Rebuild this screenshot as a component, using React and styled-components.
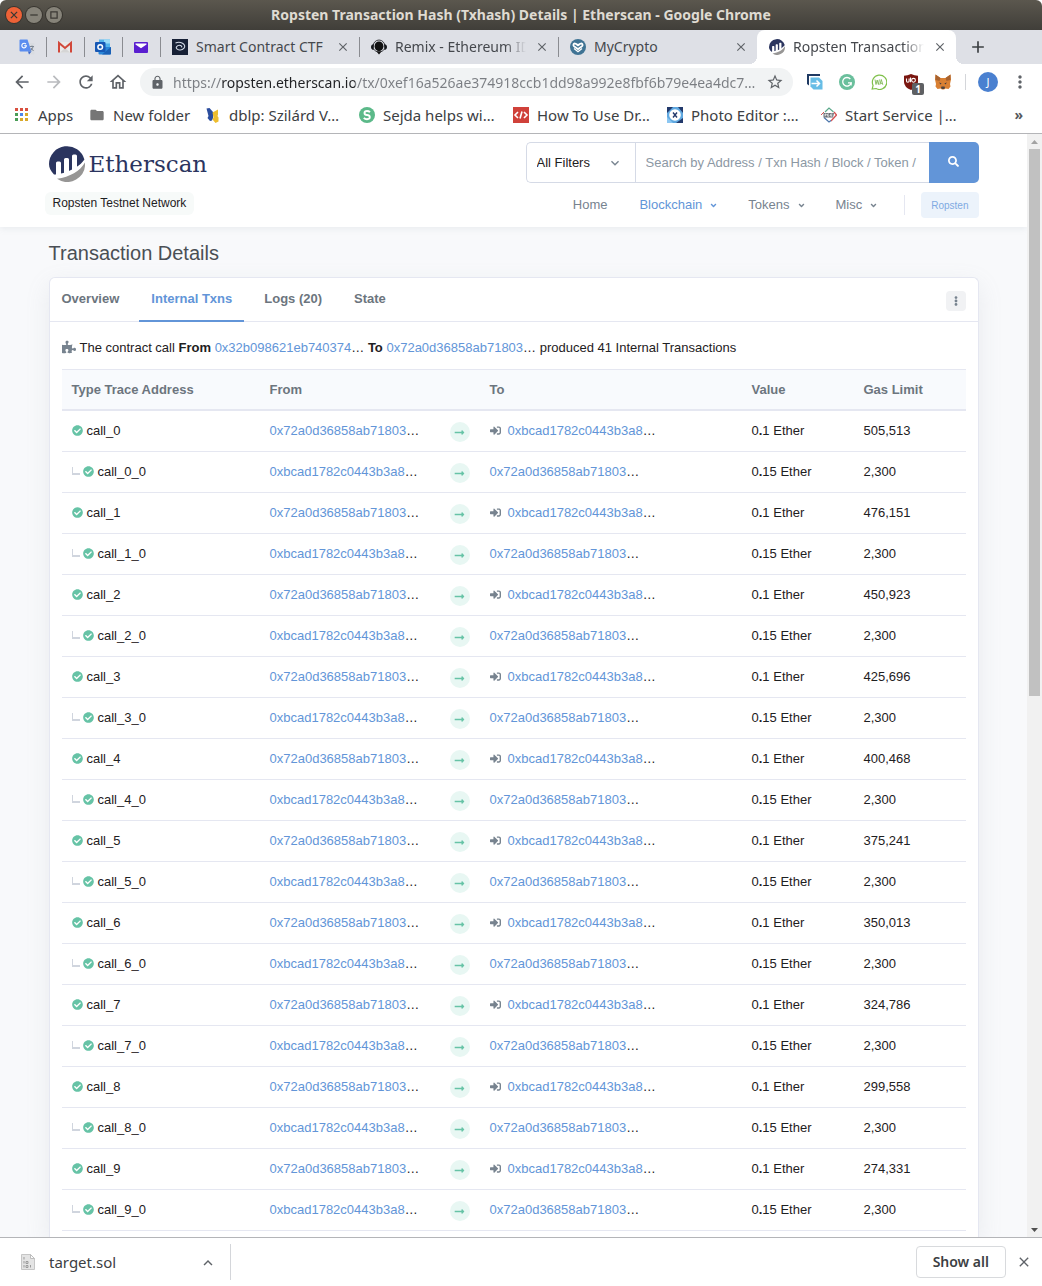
import React from "react";
import styled, { createGlobalStyle, css } from "styled-components";
import {
  FaCheckCircle,
  FaSignInAlt,
  FaSearch,
  FaEllipsisV,
  FaLongArrowAltRight,
  FaAngleDown,
  FaPuzzlePiece,
} from "react-icons/fa";
import {
  MdArrowBack,
  MdArrowForward,
  MdRefresh,
  MdLock,
  MdStarBorder,
  MdMoreVert,
  MdClose,
  MdAdd,
  MdKeyboardArrowUp,
  MdKeyboardArrowDown,
  MdFolder,
  MdOutlineHome,
} from "react-icons/md";

const ui = `"Noto Sans", "Open Sans", sans-serif`;
const sans = `"Liberation Sans", Arial, sans-serif`;

const c = {
  link: "#6295d8",
  text: "#1e2022",
  muted: "#77838f",
  head: "#6c757e",
  line: "#e5e7f1",
  green: "#66c3a6",
  navy: "#2b355f",
  chrome: "#5f6368",
};

const GlobalStyle = createGlobalStyle`
  *, *::before, *::after { box-sizing: border-box; }
  body { margin: 0; background: #fff; font-family: ${sans}; }
  button, input, select { font-family: inherit; margin: 0; }
  button { border: 0; padding: 0; background: none; cursor: pointer; }
  a { color: ${c.link}; text-decoration: none; }
  svg { display: block; flex: none; }
`;

/* ---------- window chrome ---------- */

const Window = styled.div`
  display: flex;
  flex-direction: column;
  height: 100vh;
  overflow: hidden;
`;

const TitleBar = styled.header`
  display: grid;
  grid-template-columns: 1fr auto 1fr;
  align-items: center;
  flex: none;
  height: 30px;
  padding: 0 6px;
  border-radius: 6px 6px 0 0;
  background: linear-gradient(#5b574e, #403e39);
`;

const WindowButtons = styled.div`
  display: flex;
  gap: 4px;
`;

const WindowButton = styled.button`
  display: grid;
  place-items: center;
  width: 16px;
  height: 16px;
  border-radius: 50%;
  color: #3b3934;
  background: ${(p) => (p.$close ? "#ee6237" : "#868379")};
  box-shadow: 0 0 0 1px #37352f;
`;

const WindowTitle = styled.div`
  color: #dfdbd2;
  font: 700 14px/20px ${ui};
  white-space: nowrap;
`;

const TabStrip = styled.nav`
  display: flex;
  flex: none;
  height: 34px;
  padding-left: 8px;
  background: #dee0e6;
`;

const tabBase = css`
  display: flex;
  align-items: center;
  position: relative;
  height: 34px;
`;

const tabDivider = css`
  content: "";
  width: 1px;
  height: 20px;
  background: #8a8c91;
  position: absolute;
  right: -1px;
`;

const PinnedTab = styled.button`
  ${tabBase}
  justify-content: center;
  flex: none;
  width: 38px;
  &::after {
    ${tabDivider}
  }
`;

const Tab = styled.div`
  ${tabBase}
  flex: 0 1 199px;
  min-width: 0;
  gap: 8px;
  padding: 0 8px 0 12px;
  color: #45484d;
  border-radius: 8px 8px 0 0;
  ${(p) =>
    p.$divider &&
    css`
      &::after {
        ${tabDivider}
      }
    `}
  ${(p) =>
    p.$active &&
    css`
      background: #fff;
      &::before {
        content: "";
        position: absolute;
        bottom: 0;
        left: -8px;
        right: -8px;
        height: 8px;
        background:
          radial-gradient(circle at 0 0, transparent 8px, #fff 8px) left / 8px 8px no-repeat,
          radial-gradient(circle at 100% 0, transparent 8px, #fff 8px) right / 8px 8px no-repeat;
      }
    `}
`;

const TabTitle = styled.span`
  flex: 1;
  min-width: 0;
  overflow: hidden;
  white-space: nowrap;
  font: 14px/20px ${ui};
  mask-image: ${(p) => (p.$fade ? "linear-gradient(90deg, #000 84%, transparent)" : "none")};
`;

const IconButton = styled.button`
  display: grid;
  place-items: center;
  flex: none;
  width: ${(p) => p.$w || 16}px;
  height: ${(p) => p.$w || 16}px;
  color: ${(p) => p.$color || c.chrome};
`;

const NewTab = styled(IconButton)`
  align-self: center;
  margin-left: 12px;
`;

const Toolbar = styled.div`
  display: flex;
  align-items: center;
  flex: none;
  height: 36px;
  padding: 0 12px;
  background: #fff;
`;

const NavButtons = styled.div`
  display: flex;
  gap: 12px;
  margin-right: 12px;
`;

const AddressBar = styled.label`
  display: flex;
  align-items: center;
  flex: 1;
  min-width: 0;
  height: 28px;
  padding: 0 8px 0 10px;
  gap: 8px;
  border-radius: 14px;
  background: #f1f3f4;
  color: ${c.chrome};
`;

const AddressInput = styled.input`
  flex: 1;
  min-width: 0;
  height: 28px;
  padding: 0;
  border: 0;
  outline: 0;
  font: 14px/20px ${ui};
  color: transparent;
  background: linear-gradient(90deg, #7b7e83 48px, #202124 48px, #202124 182px, #7b7e83 182px);
  background-clip: text;
  -webkit-background-clip: text;
`;

const Extensions = styled.div`
  display: flex;
  align-items: center;
  gap: 16px;
  margin-left: 14px;
`;

const ExtensionButton = styled(IconButton)`
  position: relative;
`;

const CountBadge = styled.span`
  position: absolute;
  left: 9px;
  top: 9px;
  width: 12px;
  height: 12px;
  border-radius: 2px;
  background: #5e6063;
  color: #fff;
  font: 700 10px/12px ${ui};
  text-align: center;
`;

const Divider = styled.span`
  width: 1px;
  height: ${(p) => p.$h}px;
  background: ${(p) => p.$color || "#d4d6da"};
`;

const Avatar = styled.button`
  width: 20px;
  height: 20px;
  border-radius: 50%;
  background: #4a80d0;
  color: #fff;
  font: 11px/20px ${ui};
`;

const Profile = styled.div`
  display: flex;
  align-items: center;
  gap: 12px;
  margin-left: 14px;
`;

const Bookmarks = styled.nav`
  display: flex;
  align-items: center;
  flex: none;
  height: 34px;
  padding: 0 19px 4px 14px;
  border-bottom: 1px solid #b4b5b8;
  background: #fff;
`;

const Bookmark = styled.a`
  display: flex;
  align-items: center;
  flex: none;
  gap: 8px;
  width: ${(p) => p.$w}px;
  color: #3c4043;
  font: 15px/20px ${ui};
  white-space: nowrap;
`;

const MoreBookmarks = styled.button`
  margin-left: auto;
  color: #55585c;
  font: 700 14px/20px ${ui};
`;

/* ---------- page ---------- */

const Viewport = styled.div`
  display: flex;
  flex: 1;
  min-height: 0;
`;

const Page = styled.div`
  display: flex;
  flex-direction: column;
  flex: 1;
  min-width: 0;
  overflow: hidden;
  background: #f8f9fb;
  color: ${c.text};
  font-size: 13px;
  line-height: 20px;
`;

const Container = styled.div`
  width: 100%;
  max-width: 960px;
  margin: 0 auto;
  padding: 0 15px;
`;

const SiteHeader = styled.header`
  flex: none;
  background: #fff;
  box-shadow: 0 2px 6px rgba(140, 152, 164, 0.13);
`;

const HeaderInner = styled(Container)`
  display: flex;
  justify-content: space-between;
  height: 93px;
  padding-top: 8px;
`;

const Brand = styled.div`
  display: flex;
  flex-direction: column;
  align-items: flex-start;
  gap: 10px;
  padding-top: 4px;
`;

const Logo = styled.a`
  display: flex;
  align-items: center;
  gap: 4px;
  height: 36px;
  color: ${c.navy};
  font: 23px/36px "DejaVu Serif", serif;
`;

const NetworkBadge = styled.span`
  margin-left: -4px;
  padding: 0 8px;
  border-radius: 6px;
  background: #f7faf9;
  font-size: 12px;
  line-height: 23px;
`;

const HeaderRight = styled.div`
  display: flex;
  flex-direction: column;
  align-items: flex-end;
  gap: 9px;
`;

const SearchForm = styled.form`
  display: flex;
  width: 453px;
  height: 41px;
`;

const FilterWrap = styled.div`
  display: grid;
  align-items: center;
  flex: none;
  width: 109px;
  border: 1px solid #d5dae6;
  border-right: 0;
  border-radius: 5px 0 0 5px;
  background: #fff;
  & > * {
    grid-area: 1 / 1;
  }
  & > svg {
    justify-self: end;
    margin-right: 12px;
    color: ${c.muted};
    pointer-events: none;
  }
`;

const FilterSelect = styled.select`
  appearance: none;
  width: 100%;
  height: 39px;
  padding: 0 10px;
  border: 0;
  background: transparent;
  color: ${c.text};
  font-size: 13px;
`;

const SearchInput = styled.input`
  flex: 1;
  min-width: 0;
  padding: 0 10px;
  border: 1px solid #d5dae6;
  border-right: 0;
  border-radius: 0;
  background: #fff;
  font-size: 13px;
  &::placeholder {
    color: #8c98a4;
    opacity: 1;
  }
`;

const SearchButton = styled.button`
  display: grid;
  place-items: center;
  flex: none;
  width: 50px;
  padding-bottom: 3px;
  border-radius: 0 5px 5px 0;
  background: ${c.link};
  color: #fff;
`;

const SiteNav = styled.nav`
  display: flex;
  align-items: center;
  height: 26px;
`;

const NavLink = styled.a`
  display: flex;
  align-items: center;
  gap: 7px;
  margin-right: ${(p) => p.$gap || 30}px;
  color: ${(p) => (p.$active ? c.link : c.muted)};
`;

const NetworkButton = styled.button`
  height: 26px;
  margin-left: 16px;
  padding: 0 10px;
  border-radius: 4px;
  background: #ecf3fb;
  color: #7faae2;
  font-size: 10px;
`;

const Main = styled(Container).attrs({ as: "main" })`
  display: flex;
  flex-direction: column;
  flex: 1;
  min-height: 0;
`;

const PageTitle = styled.h1`
  margin: 0;
  padding: 13px 0 11px;
  color: #4a4f55;
  font-size: 20px;
  font-weight: 400;
  line-height: 26px;
`;

const Card = styled.section`
  flex: 1;
  border: 1px solid ${c.line};
  border-bottom: 0;
  border-radius: 6px 6px 0 0;
  background: #fff;
  box-shadow: 0 8px 24px rgba(140, 152, 164, 0.14);
`;

const CardTabs = styled.nav`
  display: flex;
  align-items: center;
  height: 44px;
  gap: 8px;
  padding-right: 12px;
  border-bottom: 1px solid ${c.line};
`;

const CardTab = styled.a`
  align-self: stretch;
  padding: 11px 12px 0;
  margin-bottom: -1px;
  border-bottom: ${(p) => (p.$active ? `2px solid ${c.link}` : "0")};
  color: ${(p) => (p.$active ? c.link : c.head)};
  font-weight: 700;
`;

const CardMenu = styled.button`
  display: grid;
  place-items: center;
  width: 20px;
  height: 20px;
  margin-left: auto;
  margin-top: 3px;
  border-radius: 4px;
  background: #f1f2f4;
  color: ${c.muted};
`;

const CardBody = styled.div`
  padding: 16px 12px 0;
`;

const Summary = styled.p`
  display: flex;
  align-items: center;
  gap: 4px;
  margin: 0 0 11px;
  white-space: nowrap;
  & > svg {
    margin-bottom: 2px;
    color: ${c.muted};
  }
`;

const Table = styled.table`
  width: 100%;
  table-layout: fixed;
  border-collapse: separate;
  border-spacing: 0;
`;

const Th = styled.th`
  height: 42px;
  padding: 0 10px;
  border-top: 1px solid ${c.line};
  border-bottom: 2px solid ${c.line};
  background: #f8fafd;
  color: ${c.head};
  font-weight: 700;
  text-align: left;
`;

const Td = styled.td`
  height: 41px;
  padding: 0 10px;
  border-bottom: 1px solid ${c.line};
  white-space: nowrap;
`;

const Cell = styled.div`
  display: flex;
  align-items: center;
  gap: ${(p) => p.$gap}px;
  & > svg {
    margin-bottom: 1px;
  }
`;

const Branch = styled.span`
  width: 8px;
  height: 8px;
  margin-right: -1px;
  margin-bottom: 2px;
  border-left: 1px solid #d0d5de;
  border-bottom: 2px solid #d0d5de;
`;

const CheckIcon = styled(FaCheckCircle)`
  color: ${c.green};
`;

const EnterIcon = styled(FaSignInAlt)`
  color: ${c.muted};
`;

const ArrowBadge = styled.span`
  display: grid;
  place-items: center;
  width: 20px;
  height: 20px;
  margin-top: 2px;
  border-radius: 50%;
  background: #e8f7f3;
  color: ${c.green};
`;

const ScrollTrack = styled.div`
  display: flex;
  flex-direction: column;
  flex: none;
  width: 15px;
  background: #f1f1f1;
`;

const ScrollArrow = styled.span`
  display: grid;
  place-items: center;
  height: 15px;
`;

const ScrollLane = styled.div`
  flex: 1;
  padding: 0 2px;
`;

const ScrollThumb = styled.div`
  height: 51%;
  background: #c1c1c1;
`;

/* ---------- downloads ---------- */

const DownloadBar = styled.footer`
  display: flex;
  align-items: center;
  flex: none;
  height: 49px;
  padding: 0 10px 0 20px;
  border-top: 1px solid #b4b5b8;
  background: #fff;
`;

const DownloadItem = styled.button`
  display: flex;
  align-items: center;
  gap: 13px;
  color: #3c4043;
  font: 15px/22px ${ui};
`;

const DownloadMenu = styled(IconButton)`
  margin: 0 15px 0 83px;
`;

const ShowAll = styled.button`
  height: 32px;
  margin-left: auto;
  margin-right: 10px;
  padding: 0 16px;
  border: 1px solid #d8dadd;
  border-radius: 4px;
  color: #3c4043;
  font: 600 14px/20px ${ui};
`;

/* ---------- drawings ---------- */

const Icon16 = ({ size = 16, children }) => (
  <svg width={size} height={size} viewBox="0 0 16 16" aria-hidden="true">
    {children}
  </svg>
);

const EtherscanMark = ({ size = 36 }) => (
  <svg width={size} height={size} viewBox="0 0 36 36" aria-hidden="true">
    <path d="M5 28.4C1.6 25 0 21.600 0 18A18 18 0 0 1 35.400 13.600C32 19 23 25.500 11 27.800Q6.500 29 5 28.400Z" fill={c.navy} />
    <path d="M7 30V17a1.500 1.500 0 0 1 1.500-1.500h2A1.500 1.500 0 0 1 12 17v12zM15 28V13.500a1.500 1.500 0 0 1 1.500-1.500h2a1.500 1.500 0 0 1 1.500 1.500V27zM23 25V10a1.500 1.500 0 0 1 1.500-1.500h2A1.500 1.500 0 0 1 28 10v12z" fill="#fff" />
    <path d="M8 32.800C21 31 31 25 36 16.500A18 18 0 0 1 8 32.800Z" fill="#979695" />
  </svg>
);

const TranslateIcon = () => (
  <Icon16>
    <path d="M6 4h8.500q1 0 1 1v9.500q0 1-1 1H10z" fill="#d9dce1" />
    <path d="M1.500.5h7l4 12h-11Q.5 12.500.5 11.500v-10Q.5.500 1.500.500z" fill="#5b8def" />
    <path d="M9 12.500h3.500L10 15.500z" fill="#3a66c9" />
    <path d="M7 5.200A2.300 2.300 0 1 0 7.400 6.800H5.200" fill="none" stroke="#fff" strokeWidth="1.100" />
    <path d="M11 7.500h4M13 6.500v1M14.200 7.500q-.7 2.500-2.500 4M12 9l2.500 3" fill="none" stroke="#7d8794" />
  </Icon16>
);

const GmailIcon = () => (
  <Icon16>
    <path d="M1 3h14v10.500H1z" fill="#e9e9e9" />
    <path d="M3 13.500L8 9l5 4.500z" fill="#d5d5d5" />
    <path d="M2 13.500V4L8 9l6-5v9.500" fill="none" stroke="#d1483a" strokeWidth="2" />
  </Icon16>
);

const OutlookIcon = () => (
  <Icon16>
    <path d="M4 .5h11v8H4z" fill="#53b4ec" />
    <path d="M9 .5h6v4H9z" fill="#9bdcf8" />
    <path d="M3.500 8L16 8v6.500q0 1-1 1H4.500q-1 0-1-1z" fill="#2a86d8" />
    <path d="M16 8l-9 7.500h8q1 0 1-1z" fill="#1a60b5" />
    <rect y="3" width="10.500" height="10" rx="1" fill="#1759b5" />
    <circle cx="5.200" cy="8" r="2.300" fill="none" stroke="#fff" strokeWidth="1.500" />
  </Icon16>
);

const MailIcon = () => (
  <Icon16>
    <rect x="1" y="3" width="14" height="11" rx="1" fill="#5a1fd0" />
    <path d="M2.500 4.500h11v1L8 9.200 2.500 5.500z" fill="#fff" />
  </Icon16>
);

const SwirlIcon = () => (
  <Icon16>
    <path d="M0 0h16v16H0z" fill="#172136" />
    <path d="M3.500 4Q7 2.500 10.500 4.200q3.500 2.300 1.500 5-2 2.500-5.500 1.600-3-1-2-3Q6 5.800 8.500 6.500q1.800.8 1 1.900" fill="none" stroke="#d3dae6" strokeWidth="1.100" />
  </Icon16>
);

const RemixIcon = () => (
  <Icon16>
    <path d="M2 7.500a6 6.500 0 0 1 12 0" fill="none" stroke="#16181c" strokeWidth=".8" />
    <ellipse cx="8" cy="7.300" rx="4.400" ry="4.900" fill="#111" />
    <path d="M2.800 5v6Q0 10.500 0 8t2.800-3zM13.200 5v6Q16 10.500 16 8t-2.800-3z" fill="#16181c" />
    <path d="M3 10.500q1.500 2.500 5 2.500t5-2.500" fill="none" stroke="#16181c" strokeWidth=".8" />
    <path d="M5.500 12.500h5L8 15.500z" fill="#111" />
  </Icon16>
);

const MyCryptoIcon = () => (
  <Icon16>
    <circle cx="8" cy="8" r="8" fill="#3f7394" />
    <path d="M4.200 3.500q2 0 3.800 1.500 1.800-1.500 3.800-1.500Q13.500 4 13.500 6q0 1.200-1 2L8 11.300 3.500 8q-1-.8-1-2 0-2 1.700-2.500z" fill="#fff" />
    <path d="M4.500 5.800l3.500 2.500 3.500-2.500" fill="none" stroke="#3f7394" strokeWidth="1.300" />
    <path d="M4 9.500l4 3.200 4-3.200" fill="none" stroke="#fff" strokeWidth="1.300" />
  </Icon16>
);

const AppsIcon = () => (
  <svg width="16" height="16" viewBox="0 0 16 16" aria-hidden="true">
    {["#d9503f", "#d9503f", "#d9503f", "#4a9d57", "#4c86ec", "#d9a92a", "#4a9d57", "#d9a92a", "#d9a92a"].map((f, i) => (
      <rect key={i} x={1 + (i % 3) * 5} y={1 + Math.floor(i / 3) * 5} width="3" height="3" fill={f} />
    ))}
  </svg>
);

const DblpIcon = () => (
  <Icon16>
    <path d="M1.500 1.500l3-.5L8 5v6l-1 2.500-2 .5-2.500-3 1-2z" fill="#2b4d9e" />
    <path d="M7.500 5.500L13 2.500v5l-.5 1.500 1 1.500v4l-3 1.500L7.500 12.500l1-2z" fill="#eebd2e" />
  </Icon16>
);

const SejdaIcon = () => (
  <Icon16>
    <circle cx="8" cy="8" r="8" fill="#5bb989" />
    <path d="M11 5.200Q9.800 4 8 4 5.500 4 5.500 6T8 8t2.800 2T8 12.200q-2 0-3.200-1.400" fill="none" stroke="#fff" strokeWidth="1.900" />
  </Icon16>
);

const CodeIcon = () => (
  <Icon16>
    <path d="M0 0h16v16H0z" fill="#d0413a" />
    <path d="M5 5L2 8l3 3M11 5l3 3-3 3M9 4.500l-2 7" fill="none" stroke="#fff" strokeWidth="1.600" />
  </Icon16>
);

const PhotoIcon = () => (
  <Icon16>
    <path d="M0 0h16v16H0z" fill="#5fa8e0" />
    <path d="M0 0h6L0 6zM11 0h5v6zM16 11v5H9z" fill="#22396b" />
    <path d="M0 10v6h6z" fill="#8cc7f2" />
    <circle cx="8" cy="8" r="5.800" fill="#fff" />
    <path d="M6 5.500l4 5M10 5.500l-4 5" stroke="#22396b" strokeWidth="1.400" />
  </Icon16>
);

const PgeIcon = () => (
  <Icon16>
    <path d="M4 5l4-4 4.500 4" fill="none" stroke="#5aa88a" strokeWidth="1.200" />
    <path d="M13 5l2.500 3L10 14" fill="none" stroke="#d65252" strokeWidth="1.300" />
    <path d="M3 10.500L8 15l2-1.500" fill="none" stroke="#4c76ab" strokeWidth="1.200" />
    <path d="M0 8l3-3" stroke="#d65252" />
    <path d="M2.500 6h10.500l-1 4.500H2.500z" fill="#6a6e74" />
    <path d="M4 9.500V7h1.200v1.200H4M8 7H6.600v2.200H8V8.200M11.500 7h-1.800v2.200h1.800M9.700 8.200h1.500" fill="none" stroke="#fff" strokeWidth=".7" />
  </Icon16>
);

const ShareIcon = () => (
  <Icon16>
    <path d="M0 0h13v2H2v9.500L0 10z" fill="#1f3a63" />
    <path d="M3.500 3.500h8.500l3.500 3.500v8.500h-9l-3-3z" fill="#67bde6" />
    <path d="M4.500 9.500h8M9.500 6.500l3 3-3 3" fill="none" stroke="#fff" strokeWidth="1.500" />
  </Icon16>
);

const GrammarIcon = () => (
  <Icon16>
    <circle cx="8" cy="8" r="8" fill="#6abf9c" />
    <path d="M11.300 5A4.300 4.300 0 1 0 12.200 8.800H9" fill="none" stroke="#fff" strokeWidth="1.300" />
    <path d="M12.200 8.500v3" stroke="#fff" />
  </Icon16>
);

const WaIcon = () => (
  <Icon16>
    <path d="M1.200 15l.9-3.600A7.200 7.200 0 1 1 5 14.500z" fill="#fff" stroke="#7fc04a" strokeWidth="1.200" />
    <path d="M4 5.500l1 5 1.200-4.500 1.200 4.500 1-5M8.800 10.800l1.500-5.300 1.500 5.300M9.300 9.300h2" fill="none" stroke="#7fb956" strokeWidth=".9" />
  </Icon16>
);

const ShieldIcon = () => (
  <Icon16>
    <path d="M8 0q3.500 1.800 7 1.800V8q0 5-7 8-7-3-7-8V1.800Q4.500 1.800 8 0z" fill="#7a1710" />
    <path d="M3.500 4.500V7q0 1.200 1.300 1.200T6.100 7V4.500M7.500 3.500V8.200" fill="none" stroke="#fff" strokeWidth="1.100" />
    <circle cx="10.500" cy="6.300" r="1.900" fill="none" stroke="#fff" strokeWidth="1.100" />
  </Icon16>
);

const FoxIcon = () => (
  <Icon16>
    <path d="M.500.500L5.500 4h5l5-3.500.5 5-1 4.500.5 2.500-2 2.500-3-.5-1.500 1h-2L5.500 14.500l-3 .5-2-2.500L1 10 0 5.500z" fill="#d98033" />
    <path d="M.500.500L5.500 4 4.500 7 .5 6zM15.500.500l-5 3.500 1 3 4-1z" fill="#a8622f" />
    <path d="M4 8.500l2.500.8-.8 1.200zM12 8.500l-2.500.8.800 1.200z" fill="#3a3a42" />
    <path d="M6.500 12.500h3l.5 1.500-1 1H7l-1-1z" fill="#4b4342" />
  </Icon16>
);

const FileIcon = () => (
  <Icon16>
    <path d="M1.500.500h9l4 4v11h-13z" fill="#e4e4e4" stroke="#c6c6c6" />
    <path d="M10.500.500v4h4z" fill="#fafafa" stroke="#bdbdbd" />
    <path d="M4 3v2.500M4 7v2.500M6 7.500h2v2H6zM4 11v2.500M6 11.500h2v2H6zM10.500 11v2.500" fill="none" stroke="#9b9b9b" />
  </Icon16>
);

/* ---------- data ---------- */

const PARENT = "0x72a0d36858ab71803";
const CHILD = "0xbcad1782c0443b3a8";
const GAS = ["505,513", "476,151", "450,923", "425,696", "400,468", "375,241", "350,013", "324,786", "299,558", "274,331"];

const rows = GAS.flatMap((gas, i) => [
  { name: `call_${i}`, from: PARENT, to: CHILD, value: "1", gas },
  { name: `call_${i}_0`, from: CHILD, to: PARENT, value: "15", gas: "2,300", nested: true },
]);

const bookmarks = [
  { label: "Apps", icon: <AppsIcon />, w: 75 },
  { label: "New folder", icon: <MdFolder size={16} color="#757575" />, w: 116 },
  { label: "dblp: Szilárd V…", icon: <DblpIcon />, w: 154 },
  { label: "Sejda helps wi…", icon: <SejdaIcon />, w: 154 },
  { label: "How To Use Dr…", icon: <CodeIcon />, w: 154 },
  { label: "Photo Editor :…", icon: <PhotoIcon />, w: 154 },
  { label: "Start Service |…", icon: <PgeIcon />, w: 154 },
];

const pinned = [
  { label: "Translate", icon: <TranslateIcon /> },
  { label: "Gmail", icon: <GmailIcon /> },
  { label: "Outlook", icon: <OutlookIcon /> },
  { label: "Mail", icon: <MailIcon /> },
];

const tabs = [
  { label: "Smart Contract CTF", icon: <SwirlIcon />, divider: true },
  { label: "Remix - Ethereum IDE", icon: <RemixIcon />, divider: true, fade: true },
  { label: "MyCrypto", icon: <MyCryptoIcon /> },
  { label: "Ropsten Transaction", icon: <EtherscanMark size={16} />, active: true, fade: true },
];

const Hash = ({ children }) => (
  <span>
    <a href="#address">{children}</a>…
  </span>
);

const BrowserChrome = () => (
  <>
    <TitleBar>
      <WindowButtons>
        <WindowButton $close aria-label="Close window">
          <Icon16 size={10}><path d="M3 3l10 10M13 3L3 13" stroke="currentColor" strokeWidth="2" /></Icon16>
        </WindowButton>
        <WindowButton aria-label="Minimize window">
          <Icon16 size={10}><path d="M2 8h12" stroke="currentColor" strokeWidth="2" /></Icon16>
        </WindowButton>
        <WindowButton aria-label="Maximize window">
          <Icon16 size={10}><path d="M3 3h10v10H3z" fill="none" stroke="currentColor" strokeWidth="2" /></Icon16>
        </WindowButton>
      </WindowButtons>
      <WindowTitle>Ropsten Transaction Hash (Txhash) Details | Etherscan - Google Chrome</WindowTitle>
    </TitleBar>
    <TabStrip>
      {pinned.map((t) => (
        <PinnedTab key={t.label} aria-label={t.label}>{t.icon}</PinnedTab>
      ))}
      {tabs.map((t) => (
        <Tab key={t.label} $active={t.active} $divider={t.divider}>
          {t.icon}
          <TabTitle $fade={t.fade}>{t.label}</TabTitle>
          <IconButton aria-label={`Close ${t.label}`}><MdClose size={14} /></IconButton>
        </Tab>
      ))}
      <NewTab $w={20} $color="#3c4043" aria-label="New tab"><MdAdd size={20} /></NewTab>
    </TabStrip>
    <Toolbar>
      <NavButtons>
        <IconButton $w={20} aria-label="Back"><MdArrowBack size={20} /></IconButton>
        <IconButton $w={20} $color="#b9bbbe" aria-label="Forward"><MdArrowForward size={20} /></IconButton>
        <IconButton $w={20} aria-label="Reload"><MdRefresh size={20} /></IconButton>
        <IconButton $w={20} aria-label="Home"><MdOutlineHome size={20} /></IconButton>
      </NavButtons>
      <AddressBar>
        <MdLock size={15} />
        <AddressInput
          aria-label="Address"
          defaultValue="https://ropsten.etherscan.io/tx/0xef16a526ae374918ccb1dd98a992e8fbf6b79e4ea4dc7…"
        />
        <IconButton $w={20} aria-label="Bookmark this page"><MdStarBorder size={18} /></IconButton>
      </AddressBar>
      <Extensions>
        <IconButton aria-label="Share"><ShareIcon /></IconButton>
        <IconButton aria-label="Grammar"><GrammarIcon /></IconButton>
        <IconButton aria-label="Chat"><WaIcon /></IconButton>
        <ExtensionButton aria-label="Blocker">
          <ShieldIcon />
          <CountBadge>1</CountBadge>
        </ExtensionButton>
        <IconButton aria-label="Wallet"><FoxIcon /></IconButton>
      </Extensions>
      <Profile>
        <Divider $h={16} />
        <Avatar>J</Avatar>
        <IconButton $w={20} aria-label="Browser menu"><MdMoreVert size={20} /></IconButton>
      </Profile>
    </Toolbar>
    <Bookmarks>
      {bookmarks.map((b) => (
        <Bookmark key={b.label} href="#bookmark" $w={b.w}>
          {b.icon}
          {b.label}
        </Bookmark>
      ))}
      <MoreBookmarks aria-label="More bookmarks">»</MoreBookmarks>
    </Bookmarks>
  </>
);

const Header = () => (
  <SiteHeader>
    <HeaderInner>
      <Brand>
        <Logo href="#home">
          <EtherscanMark />
          Etherscan
        </Logo>
        <NetworkBadge>Ropsten Testnet Network</NetworkBadge>
      </Brand>
      <HeaderRight>
        <SearchForm onSubmit={(e) => e.preventDefault()}>
          <FilterWrap>
            <FilterSelect aria-label="Filter">
              <option>All Filters</option>
            </FilterSelect>
            <MdKeyboardArrowDown size={16} />
          </FilterWrap>
          <SearchInput aria-label="Search" placeholder="Search by Address / Txn Hash / Block / Token /" />
          <SearchButton aria-label="Submit search"><FaSearch size={11} /></SearchButton>
        </SearchForm>
        <SiteNav>
          <NavLink href="#home" $gap={32}>Home</NavLink>
          <NavLink href="#blockchain" $active>Blockchain <FaAngleDown size={9} /></NavLink>
          <NavLink href="#tokens">Tokens <FaAngleDown size={9} /></NavLink>
          <NavLink href="#misc" $gap={26}>Misc <FaAngleDown size={9} /></NavLink>
          <Divider $h={20} $color={c.line} />
          <NetworkButton>Ropsten</NetworkButton>
        </SiteNav>
      </HeaderRight>
    </HeaderInner>
  </SiteHeader>
);

const TransactionTable = () => (
  <Table>
    <colgroup>
      <col width="198" />
      <col width="180" />
      <col width="40" />
      <col width="262" />
      <col width="112" />
      <col width="112" />
    </colgroup>
    <thead>
      <tr>
        <Th>Type Trace Address</Th>
        <Th>From</Th>
        <Th aria-label="Direction" />
        <Th>To</Th>
        <Th>Value</Th>
        <Th>Gas Limit</Th>
      </tr>
    </thead>
    <tbody>
      {rows.map((r) => (
        <tr key={r.name}>
          <Td>
            <Cell $gap={4}>
              {r.nested && <Branch />}
              <CheckIcon size={11} />
              {r.name}
            </Cell>
          </Td>
          <Td><Hash>{r.from}</Hash></Td>
          <Td>
            <ArrowBadge><FaLongArrowAltRight size={11} /></ArrowBadge>
          </Td>
          <Td>
            <Cell $gap={7}>
              {!r.nested && <EnterIcon size={11} />}
              <Hash>{r.to}</Hash>
            </Cell>
          </Td>
          <Td>0<b>.</b>{r.value} Ether</Td>
          <Td>{r.gas}</Td>
        </tr>
      ))}
    </tbody>
  </Table>
);

export default function App() {
  return (
    <Window>
      <GlobalStyle />
      <BrowserChrome />
      <Viewport>
        <Page>
          <Header />
          <Main>
            <PageTitle>Transaction Details</PageTitle>
            <Card>
              <CardTabs>
                <CardTab href="#overview">Overview</CardTab>
                <CardTab href="#internal" $active>Internal Txns</CardTab>
                <CardTab href="#logs">Logs (20)</CardTab>
                <CardTab href="#state">State</CardTab>
                <CardMenu aria-label="More options"><FaEllipsisV size={10} /></CardMenu>
              </CardTabs>
              <CardBody>
                <Summary>
                  <FaPuzzlePiece size={14} />
                  <span>
                    The contract call <b>From</b> <Hash>0x32b098621eb740374</Hash> <b>To</b>{" "}
                    <Hash>0x72a0d36858ab71803</Hash> produced 41 Internal Transactions
                  </span>
                </Summary>
                <TransactionTable />
              </CardBody>
            </Card>
          </Main>
        </Page>
        <ScrollTrack aria-hidden="true">
          <ScrollArrow>
            <svg width="7" height="4" viewBox="0 0 7 4"><path d="M0 4L3.500 0 7 4z" fill="#a3a3a3" /></svg>
          </ScrollArrow>
          <ScrollLane><ScrollThumb /></ScrollLane>
          <ScrollArrow>
            <svg width="7" height="4" viewBox="0 0 7 4"><path d="M0 0l3.500 4L7 0z" fill="#505050" /></svg>
          </ScrollArrow>
        </ScrollTrack>
      </Viewport>
      <DownloadBar>
        <DownloadItem>
          <FileIcon />
          target.sol
        </DownloadItem>
        <DownloadMenu aria-label="Download options"><MdKeyboardArrowUp size={18} /></DownloadMenu>
        <Divider $h={36} />
        <ShowAll>Show all</ShowAll>
        <IconButton aria-label="Close downloads"><MdClose size={16} /></IconButton>
      </DownloadBar>
    </Window>
  );
}
